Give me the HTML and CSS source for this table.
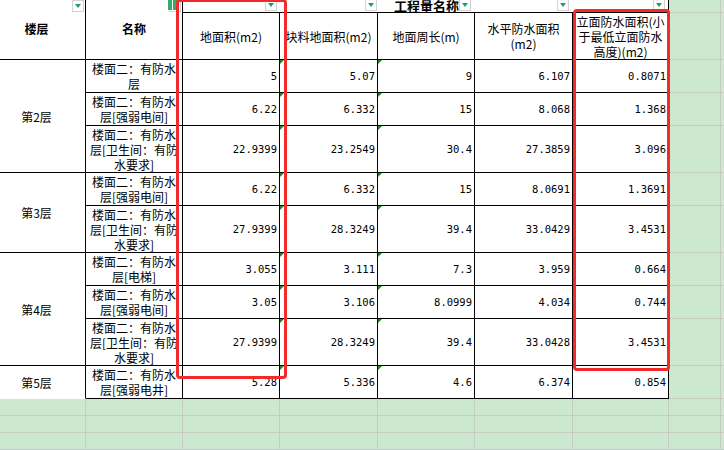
FILE: index.html
```html
<!DOCTYPE html>
<html lang="zh-CN">
<head>
<meta charset="utf-8">
<title>工程量</title>
<link rel="stylesheet" href="styles.css">
</head>
<body>
<div class="wrap">
  <div class="sheet">
    <!-- row 1 -->
    <div class="c hb r2">楼层<span class="dd dd-abs"></span></div>
    <div class="c hb r2">名称<span class="dd dd-abs"></span><span class="flag"></span></div>
    <div class="top">
      <span class="tc t1"><span class="dd"></span></span>
      <span class="tc t2"><span class="dd"></span></span>
      <span class="tc t3"><span class="dd"></span></span>
      <span class="tc t4"><span class="dd"></span></span>
      <span class="tc t5"><span class="dd"></span></span>
      <span class="title">工程量名称</span>
    </div>
    <div class="g"></div><div class="g"></div>
    <!-- row 2 -->
    <div class="c h">地面积(m2)</div>
    <div class="c h">块料地面积(m2)</div>
    <div class="c h">地面周长(m)</div>
    <div class="c h">水平防水面积<br>(m2)</div>
    <div class="c h">立面防水面积(小<br>于最低立面防水<br>高度)(m2)</div>
    <div class="g"></div><div class="g"></div>
    <!-- row 3 -->
    <div class="c r3">第2层</div>
    <div class="c nm">楼面二：有防水层</div>
    <div class="c num">5</div><div class="c num tri">5.07</div><div class="c num tri">9</div><div class="c num">6.107</div><div class="c num">0.8071</div>
    <div class="g"></div><div class="g"></div>
    <!-- row 4 -->
    <div class="c nm">楼面二：有防水层[强弱电间]</div>
    <div class="c num">6.22</div><div class="c num tri">6.332</div><div class="c num tri">15</div><div class="c num">8.068</div><div class="c num">1.368</div>
    <div class="g"></div><div class="g"></div>
    <!-- row 5 -->
    <div class="c nm">楼面二：有防水层[卫生间：有防水要求]</div>
    <div class="c num">22.9399</div><div class="c num tri">23.2549</div><div class="c num tri">30.4</div><div class="c num">27.3859</div><div class="c num">3.096</div>
    <div class="g"></div><div class="g"></div>
    <!-- row 6 -->
    <div class="c r2">第3层</div>
    <div class="c nm">楼面二：有防水层[强弱电间]</div>
    <div class="c num">6.22</div><div class="c num tri">6.332</div><div class="c num tri">15</div><div class="c num">8.0691</div><div class="c num">1.3691</div>
    <div class="g"></div><div class="g"></div>
    <!-- row 7 -->
    <div class="c nm">楼面二：有防水层[卫生间：有防水要求]</div>
    <div class="c num">27.9399</div><div class="c num tri">28.3249</div><div class="c num tri">39.4</div><div class="c num">33.0429</div><div class="c num">3.4531</div>
    <div class="g"></div><div class="g"></div>
    <!-- row 8 -->
    <div class="c r3">第4层</div>
    <div class="c nm">楼面二：有防水层[电梯]</div>
    <div class="c num">3.055</div><div class="c num tri">3.111</div><div class="c num tri">7.3</div><div class="c num">3.959</div><div class="c num">0.664</div>
    <div class="g"></div><div class="g"></div>
    <!-- row 9 -->
    <div class="c nm">楼面二：有防水层[强弱电间]</div>
    <div class="c num">3.05</div><div class="c num tri">3.106</div><div class="c num tri">8.0999</div><div class="c num">4.034</div><div class="c num">0.744</div>
    <div class="g"></div><div class="g"></div>
    <!-- row 10 -->
    <div class="c nm">楼面二：有防水层[卫生间：有防水要求]</div>
    <div class="c num">27.9399</div><div class="c num tri">28.3249</div><div class="c num tri">39.4</div><div class="c num">33.0428</div><div class="c num">3.4531</div>
    <div class="g"></div><div class="g"></div>
    <!-- row 11 -->
    <div class="c nb">第5层</div>
    <div class="c nm">楼面二：有防水层[强弱电井]</div>
    <div class="c num">5.28</div><div class="c num tri">5.336</div><div class="c num tri">4.6</div><div class="c num">6.374</div><div class="c num">0.854</div>
    <div class="g"></div><div class="g"></div>
    <!-- rows 12-14 (empty sheet) -->
    <div class="g"></div><div class="g"></div><div class="g"></div><div class="g"></div><div class="g"></div><div class="g"></div><div class="g"></div><div class="g"></div><div class="g"></div>
    <div class="g"></div><div class="g"></div><div class="g"></div><div class="g"></div><div class="g"></div><div class="g"></div><div class="g"></div><div class="g"></div><div class="g"></div>
    <div class="g"></div><div class="g"></div><div class="g"></div><div class="g"></div><div class="g"></div><div class="g"></div><div class="g"></div><div class="g"></div><div class="g"></div>
  </div>
  <div class="hl hl1"></div>
  <div class="hl hl2"></div>
</div>
</body>
</html>
```

FILE: styles.css
```css
* { box-sizing: border-box; }
html, body { margin: 0; padding: 0; }
body {
  background: #cce8cf;
  font-family: "Noto Sans CJK SC", "Noto Sans", sans-serif;
  font-size: 12px;
  color: #000;
}
.wrap {
  position: relative;
  width: 724px;
  height: 450px;
  overflow: hidden;
}
.sheet {
  display: grid;
  margin-left: -12px;
  grid-template-columns: 98px 97px 97px 98px 97px 98px 96px 52px 20px;
  grid-template-rows: 13px 47px 33px 33px 47px 33px 47px 33px 33px 47px 33px 17px 17px 17px;
}
.c {
  position: relative;
  background: #fff;
  border-right: 1px solid #000;
  border-bottom: 1px solid #000;
  display: flex;
  align-items: center;
  justify-content: center;
  text-align: center;
  line-height: 15px;
  padding: 0 2px;
}
.r2 { grid-row: span 2; }
.r3 { grid-row: span 3; }
.nb { border-bottom-color: transparent; }
.hb { font-weight: bold; padding-bottom: 3px; }
.h { white-space: nowrap; }
.num {
  justify-content: flex-end;
  font-family: "DejaVu Sans Mono", monospace;
  font-size: 10.5px;
  padding-right: 2px;
}
.tri::before {
  content: "";
  position: absolute;
  left: 0;
  top: 0;
  border-top: 4px solid #178a17;
  border-right: 4px solid transparent;
}
.g {
  border-right: 1px solid #c4ccc4;
  border-bottom: 1px solid #c4ccc4;
}
.top {
  grid-column: span 5;
  display: grid;
  grid-template-columns: 97px 98px 97px 98px 95px;
  grid-template-rows: 12px;
  background: #fff;
  border-right: 1px solid #000;
  border-bottom: 1px solid #000;
}
.title {
  grid-row: 1;
  grid-column: 1 / -1;
  justify-self: center;
  align-self: end;
  font-weight: bold;
  font-size: 13px;
  line-height: 13px;
  margin-bottom: 0;
  padding-left: 2px;
}
.tc {
  grid-row: 1;
  display: flex;
  justify-content: flex-end;
  align-items: flex-start;
}
.t1 { grid-column: 1; }
.t2 { grid-column: 2; }
.t3 { grid-column: 3; }
.t4 { grid-column: 4; }
.t5 { grid-column: 5; }
.t2 .dd { margin-right: 1px; }
.t3 .dd, .t4 .dd { margin-right: 4px; }
.dd {
  width: 12px;
  height: 12px;
  margin-top: -1px;
  margin-right: 3px;
  border: 1px solid #d2d2d2;
  background: #fff;
  display: flex;
  align-items: center;
  justify-content: center;
}
.dd::after {
  content: "";
  border-left: 3.5px solid transparent;
  border-right: 3.5px solid transparent;
  border-top: 4px solid #1f9e5e;
}
.dd-abs {
  position: absolute;
  top: 0;
  right: 1px;
  margin: 0;
}
.flag {
  position: absolute;
  top: 0;
  left: 82px;
  width: 10px;
  height: 10px;
  background: #2fae6a;
}
.flag::after {
  content: "";
  position: absolute;
  left: 4px;
  top: 0;
  width: 1px;
  height: 10px;
  background: #fff;
}
.hl {
  position: absolute;
  border: 3px solid #f32a2a;
  border-radius: 4px;
}
.hl1 { left: 176px; top: -1px; width: 111px; height: 380px; }
.hl2 { left: 573px; top: 9px; width: 97px; height: 362px; }
```
